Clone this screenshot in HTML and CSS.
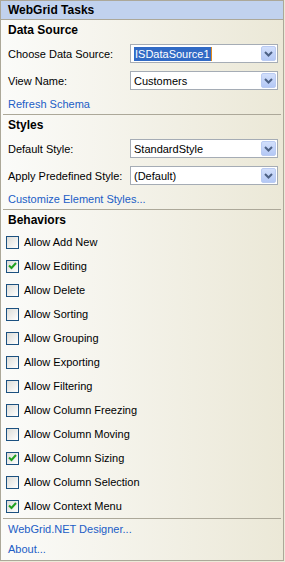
FILE: index.html
```html
<!DOCTYPE html>
<html lang="en">
  <head>
    <meta charset="UTF-8" />
    <title>WebGrid Tasks</title>
    <link rel="stylesheet" href="styles.css">
  </head>
  <body>
    <div class="panel">
      <div class="panel-head">WebGrid Tasks</div>

      <section class="group">
        <h2>Data Source</h2>
        <div class="field">
          <label>Choose Data Source:</label>
          <div class="combo"><span class="value"><span class="sel">ISDataSource1</span><span class="caret"></span></span><span class="drop"><svg width="9" height="6" viewBox="0 0 9 6"><path d="M1 1 L4.5 4.5 L8 1" fill="none" stroke="#4d6185" stroke-width="2"/></svg></span></div>
        </div>
        <div class="field">
          <label>View Name:</label>
          <div class="combo"><span class="value">Customers</span><span class="drop"><svg width="9" height="6" viewBox="0 0 9 6"><path d="M1 1 L4.5 4.5 L8 1" fill="none" stroke="#4d6185" stroke-width="2"/></svg></span></div>
        </div>
        <a class="link" href="#">Refresh Schema</a>
      </section>

      <section class="group">
        <h2>Styles</h2>
        <div class="field">
          <label>Default Style:</label>
          <div class="combo"><span class="value">StandardStyle</span><span class="drop"><svg width="9" height="6" viewBox="0 0 9 6"><path d="M1 1 L4.5 4.5 L8 1" fill="none" stroke="#4d6185" stroke-width="2"/></svg></span></div>
        </div>
        <div class="field">
          <label>Apply Predefined Style:</label>
          <div class="combo"><span class="value">(Default)</span><span class="drop"><svg width="9" height="6" viewBox="0 0 9 6"><path d="M1 1 L4.5 4.5 L8 1" fill="none" stroke="#4d6185" stroke-width="2"/></svg></span></div>
        </div>
        <a class="link" href="#">Customize Element Styles...</a>
      </section>

      <section class="group">
        <h2>Behaviors</h2>
        <div class="check"><span class="box"></span>Allow Add New</div>
        <div class="check"><span class="box on"><svg width="9" height="8" viewBox="0 0 9 8"><path d="M1 3.5 L3.5 6 L8 1" fill="none" stroke="#21a121" stroke-width="2"/></svg></span>Allow Editing</div>
        <div class="check"><span class="box"></span>Allow Delete</div>
        <div class="check"><span class="box"></span>Allow Sorting</div>
        <div class="check"><span class="box"></span>Allow Grouping</div>
        <div class="check"><span class="box"></span>Allow Exporting</div>
        <div class="check"><span class="box"></span>Allow Filtering</div>
        <div class="check"><span class="box"></span>Allow Column Freezing</div>
        <div class="check"><span class="box"></span>Allow Column Moving</div>
        <div class="check"><span class="box on"><svg width="9" height="8" viewBox="0 0 9 8"><path d="M1 3.5 L3.5 6 L8 1" fill="none" stroke="#21a121" stroke-width="2"/></svg></span>Allow Column Sizing</div>
        <div class="check"><span class="box"></span>Allow Column Selection</div>
        <div class="check"><span class="box on"><svg width="9" height="8" viewBox="0 0 9 8"><path d="M1 3.5 L3.5 6 L8 1" fill="none" stroke="#21a121" stroke-width="2"/></svg></span>Allow Context Menu</div>
      </section>

      <section class="group last">
        <a class="link" href="#">WebGrid.NET Designer...</a>
        <a class="link" href="#">About...</a>
      </section>
    </div>
  </body>
</html>
```

FILE: styles.css
```css
* {
  margin: 0;
  padding: 0;
  box-sizing: border-box;
}
body {
  background: #ece9d8;
  font-family: 'Liberation Sans', Arial, sans-serif;
  font-size: 11px;
  color: #000;
}
.panel {
  width: 284px;
  height: 561px;
  border: 1px solid #aca899;
  background: linear-gradient(to right, #fbfbf9, #ebe8d7);
}
.panel-head {
  height: 19px;
  line-height: 18px;
  padding-left: 7px;
  font-weight: 700;
  font-size: 12px;
  background: #c1d2ee;
  border-bottom: 1px solid #aca899;
}
.group {
  display: flex;
  flex-direction: column;
  margin: 0 2px;
  border-bottom: 1px solid #aca899;
}
.group.last {
  border-bottom: none;
}
.group h2 {
  height: 20px;
  line-height: 20px;
  padding-left: 5px;
  font-size: 12px;
  font-weight: 700;
}
.field {
  height: 27px;
  display: flex;
  align-items: center;
  padding-left: 5px;
}
.field label {
  width: 122px;
}
.combo {
  width: 148px;
  height: 19px;
  display: flex;
  align-items: center;
  border: 1px solid #a5acb5;
  background: #fff;
  padding: 1px;
}
.combo .value {
  flex: 1;
  padding-left: 2px;
  display: flex;
  align-items: center;
}
.combo .sel {
  background: #316ac5;
  color: #fff;
  line-height: 14px;
  padding: 0 1px;
}
.combo .caret {
  width: 1px;
  height: 14px;
  background: #e08a1e;
}
.combo .drop {
  width: 15px;
  height: 15px;
  display: flex;
  align-items: center;
  justify-content: center;
  border: 1px solid #bacbf2;
  border-radius: 2px;
  background: linear-gradient(#d2dffb, #b4c8f5);
}
.link {
  height: 20px;
  line-height: 20px;
  padding-left: 5px;
  color: #215dc6;
  text-decoration: none;
}
.check {
  height: 24px;
  display: flex;
  align-items: center;
  padding-left: 3px;
}
.box {
  width: 13px;
  height: 13px;
  margin-right: 5px;
  border: 1px solid #1c5180;
  background: linear-gradient(135deg, #dcdcd7, #fff);
  display: flex;
  align-items: center;
  justify-content: center;
}
```
